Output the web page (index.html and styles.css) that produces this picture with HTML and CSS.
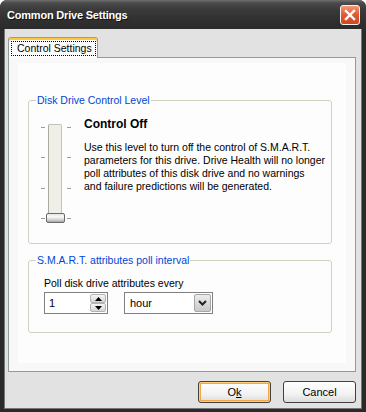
FILE: index.html
```html
<!DOCTYPE html>
<html lang="en">
<head>
	<meta charset="UTF-8">
	<title>Common Drive Settings</title>
	<link rel="stylesheet" href="styles.css">
</head>
<body>
	<div class="window">
		<!-- title bar -->
		<div class="titlebar">
			<span class="title">Common Drive Settings</span>
			<div class="close">
				<svg width="12" height="12" viewBox="0 0 12 12"><path d="M2 2 L10 10 M10 2 L2 10" stroke="#fff" stroke-width="2.4" stroke-linecap="square"/></svg>
			</div>
		</div>

		<div class="client">
			<div class="tabs">
				<div class="tab"><span class="focus">Control Settings</span></div>
			</div>

			<div class="panel">
				<div class="panel_inner">
					<fieldset class="group level">
						<legend>Disk Drive Control Level</legend>
						<div class="level_row">
							<div class="slider">
								<div class="ticks"><i></i><i></i><i></i><i></i></div>
								<div class="track"><div class="thumb"></div></div>
								<div class="ticks"><i></i><i></i><i></i><i></i></div>
							</div>
							<div class="level_text">
								<h2>Control Off</h2>
								<p>Use this level to turn off the control of S.M.A.R.T.<br>parameters for this drive. Drive Health will no longer<br>poll attributes of this disk drive and no warnings<br>and failure predictions will be generated.</p>
							</div>
						</div>
					</fieldset>

					<fieldset class="group poll">
						<legend>S.M.A.R.T. attributes poll interval</legend>
						<div class="poll_body">
							<div class="poll_label">Poll disk drive attributes every</div>
							<div class="poll_row">
								<div class="spin">
									<span class="value">1</span>
									<div class="spin_btns">
										<div class="spin_btn"><svg width="7" height="4" viewBox="0 0 7 4"><path d="M0 4 L3.5 0 L7 4 Z" fill="#000"/></svg></div>
										<div class="spin_btn"><svg width="7" height="4" viewBox="0 0 7 4"><path d="M0 0 L3.5 4 L7 0 Z" fill="#000"/></svg></div>
									</div>
								</div>
								<div class="combo">
									<span class="value">hour</span>
									<div class="combo_btn"><svg width="9" height="6" viewBox="0 0 9 6"><path d="M1 1 L4.5 4.5 L8 1" stroke="#222" stroke-width="2" fill="none"/></svg></div>
								</div>
							</div>
						</div>
					</fieldset>
				</div>
			</div>

			<div class="buttons">
				<div class="btn default">O<u>k</u></div>
				<div class="btn">Cancel</div>
			</div>
		</div>
	</div>
</body>
</html>
```

FILE: styles.css
```css
* {
	margin: 0;
	padding: 0;
	box-sizing: border-box;
}

body {
	width: 366px;
	height: 412px;
	overflow: hidden;
	font-family: "Liberation Sans", Arial, sans-serif;
	font-size: 10.5px;
	color: #000;
	background: #fff;
}

.window {
	width: 366px;
	height: 412px;
	background: #2a2a2a;
	border-radius: 7px 7px 0 0;
	display: flex;
	flex-direction: column;
}

.titlebar {
	height: 29px;
	flex: none;
	display: flex;
	align-items: center;
	justify-content: space-between;
	padding: 0 6px 0 7px;
	border-radius: 7px 7px 0 0;
	background: linear-gradient(#707070 0, #4a4a4a 3px, #3b3b3b 9px, #303030 20px, #2b2b2b 29px);
}

.title {
	color: #fff;
	font-weight: bold;
	font-size: 11px;
	letter-spacing: -0.2px;
	text-shadow: 1px 1px 0 #111;
}

.close {
	width: 20px;
	height: 20px;
	border: 1px solid #f4f4f4;
	border-radius: 3px;
	background: linear-gradient(#f29a78, #e45c33 45%, #cf4620);
	display: flex;
	align-items: center;
	justify-content: center;
}

.client {
	flex: 1;
	margin: 0 4px 3px;
	background: #e2e2e2;
	border: 1px solid #767676;
	border-top: 0;
	padding: 8px 5px 0 3px;
	display: flex;
	flex-direction: column;
}

/* tab header */
.tabs {
	display: flex;
}

.tab {
	width: 90px;
	height: 21px;
	margin-bottom: -1px;
	position: relative;
	background: #fcfcfc;
	border: 1px solid #919b9c;
	border-top: 1px solid #e68b2c;
	border-bottom: 0;
	border-radius: 3px 3px 0 0;
	box-shadow: inset 0 2px 0 #ffc73c;
	padding: 3px 1px 0 2px;
	white-space: nowrap;
}

.focus {
	display: block;
	height: 15px;
	line-height: 13px;
	padding-left: 5px;
	border: 1px dotted #000;
}

/* tab page */
.panel {
	height: 315px;
	flex: none;
	background: #f8f8f8;
	border: 1px solid #919b9c;
	padding: 5px 9px 8px 9px;
}

.panel_inner {
	height: 100%;
	background: #fdfdfd;
	padding-top: 31px;
}

.group {
	width: 304px;
	margin-left: 10px;
	border: 1px solid #d0d0bf;
	border-radius: 3px;
}

.group legend {
	color: #0046d5;
	margin-left: 7px;
	padding: 0 1px;
	line-height: 13px;
}

.level {
	padding-bottom: 21px;
}

.level_row {
	display: flex;
	padding-top: 10px;
}

.slider {
	display: flex;
	margin: 7px 0 0 12px;
}

.ticks {
	width: 4px;
	height: 92px;
	margin-top: 3px;
	display: flex;
	flex-direction: column;
	justify-content: space-between;
}

.ticks i {
	display: block;
	height: 1px;
	background: #9c9c9c;
}

.track {
	width: 14px;
	height: 98px;
	margin: 0 5px 0 3px;
	background: #efefe8;
	border: 1px solid #c2c2ba;
	border-left-color: #a9a9a2;
	border-radius: 2px;
	display: flex;
	flex-direction: column;
	justify-content: flex-end;
	align-items: center;
}

.thumb {
	flex: none;
	width: 19px;
	height: 10px;
	margin-bottom: -2px;
	border: 1px solid #6b6b6b;
	border-radius: 2px;
	background: linear-gradient(#e4e4e4, #fafafa 35%, #d4d4d4 70%, #a8a8a8);
}

.level_text {
	margin-left: 13px;
}

.level_text h2 {
	font-size: 12px;
	line-height: 14px;
}

.level_text p {
	margin-top: 10px;
	line-height: 13px;
	white-space: nowrap;
}

.poll {
	margin-top: 10px;
}

.poll_body {
	padding: 10px 15px 18px;
}

.poll_label {
	line-height: 13px;
}

.poll_row {
	display: flex;
	margin-top: 2px;
}

.spin, .combo {
	height: 22px;
	border: 1px solid #808080;
	background: #fff;
	display: flex;
	align-items: center;
	justify-content: space-between;
}

.spin {
	width: 64px;
	padding: 1px 1px 1px 4px;
}

.combo {
	width: 89px;
	margin-left: 16px;
	padding: 1px 1px 1px 5px;
}

.value {
	font-size: 11px;
}

.spin_btns {
	width: 16px;
	height: 100%;
	display: flex;
	flex-direction: column;
}

.spin_btn {
	flex: 1;
	border: 1px solid #b4b4b4;
	border-radius: 2px;
	background: linear-gradient(#f6f6f6, #d6d6d6);
	display: flex;
	align-items: center;
	justify-content: center;
}

.combo_btn {
	width: 17px;
	height: 100%;
	border: 1px solid #a6a6a6;
	border-radius: 2px;
	background: linear-gradient(#ececec, #c9c9c9);
	display: flex;
	align-items: center;
	justify-content: center;
}

/* dialog buttons */
.buttons {
	display: flex;
	justify-content: flex-end;
	gap: 12px;
	margin-top: 9px;
}

.btn {
	width: 73px;
	height: 22px;
	border: 1px solid #404040;
	border-radius: 3px;
	background: linear-gradient(#ffffff, #f2f2f2 60%, #dcdcdc);
	display: flex;
	align-items: center;
	justify-content: center;
	font-size: 11px;
}

.btn.default {
	box-shadow: inset 0 0 0 1px #ffcf78, inset 0 0 0 2px #f3a742;
}
```
